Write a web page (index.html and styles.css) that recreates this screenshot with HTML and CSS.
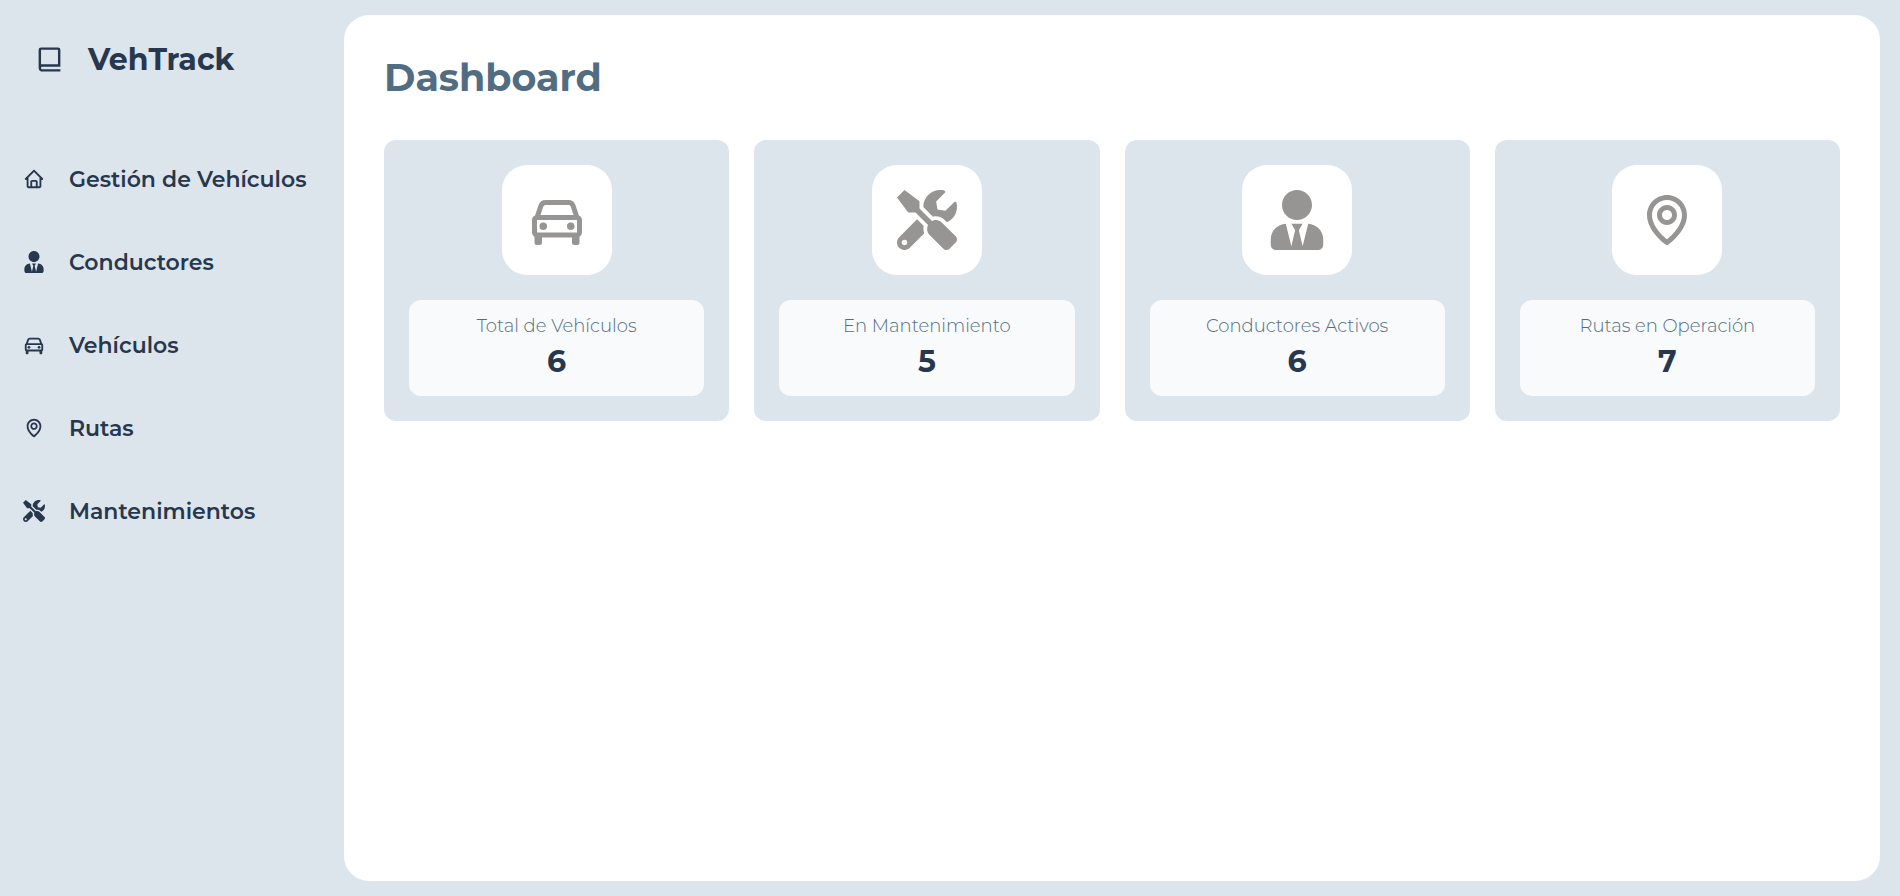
FILE: index.html
```html
<!DOCTYPE html>
<html lang="es">
<head>
<meta charset="utf-8">
<meta name="viewport" content="width=device-width, initial-scale=1">
<title>VehTrack</title>
<link rel="stylesheet" href="styles.css">
</head>
<body>
<svg class="sprite" aria-hidden="true">
  <symbol id="book" viewBox="0 0 24 24"><path fill-rule="evenodd" d="M6.012 18H21V4a2 2 0 0 0-2-2H5a2 2 0 0 0-2 2v15c0 2.201 1.794 3 3 3h15v-2H6.012C5.55 19.988 5 19.805 5 19s.55-.988 1.012-1zM5 4h14v12H5z"/></symbol>
  <symbol id="home" viewBox="0 0 24 24"><path d="M3 13h1v7c0 1.103.897 2 2 2h12c1.103 0 2-.897 2-2v-7h1a1 1 0 0 0 .707-1.707l-9-9a.999.999 0 0 0-1.414 0l-9 9A1 1 0 0 0 3 13zm7 7v-5h4v5h-4zm2-15.586 6 6V15l.001 5H16v-5c0-1.103-.897-2-2-2h-4c-1.103 0-2 .897-2 2v5H6v-9.586l6-6z"/></symbol>
  <symbol id="driver" viewBox="0 0 448 512"><path d="M224 256c70.7 0 128-57.3 128-128S294.7 0 224 0 96 57.3 96 128s57.3 128 128 128zm95.8 32.6L272 480l-32-136 32-56h-96l32 56-32 136-47.8-191.4C56.9 292 0 350.3 0 422.4V464c0 26.5 21.5 48 48 48h352c26.5 0 48-21.5 48-48v-41.6c0-72.1-56.9-130.4-128.2-133.8z"/></symbol>
  <symbol id="car" viewBox="0 0 24 24"><path d="m20.772 10.156-1.368-4.105A2.995 2.995 0 0 0 16.559 4H7.441a2.995 2.995 0 0 0-2.845 2.051l-1.368 4.105A2.003 2.003 0 0 0 2 12v5c0 .753.423 1.402 1.039 1.743-.013.066-.039.126-.039.195V21a1 1 0 0 0 1 1h1a1 1 0 0 0 1-1v-2h12v2a1 1 0 0 0 1 1h1a1 1 0 0 0 1-1v-2.062c0-.069-.026-.13-.039-.195A1.993 1.993 0 0 0 22 17v-5c0-.829-.508-1.541-1.228-1.844zM4 17v-5h16l.002 5H4zM7.441 6h9.117c.431 0 .813.274.949.684L18.613 10H5.387l1.105-3.316A1 1 0 0 1 7.441 6z"/><circle cx="6.5" cy="14.5" r="1.5"/><circle cx="17.5" cy="14.5" r="1.5"/></symbol>
  <symbol id="pin" viewBox="0 0 24 24"><path d="M12 14c2.206 0 4-1.794 4-4s-1.794-4-4-4-4 1.794-4 4 1.794 4 4 4zm0-6c1.103 0 2 .897 2 2s-.897 2-2 2-2-.897-2-2 .897-2 2-2z"/><path d="M11.42 21.814a.998.998 0 0 0 1.16 0C12.884 21.599 20.029 16.44 20 10c0-4.411-3.589-8-8-8S4 5.589 4 9.995c-.029 6.445 7.116 11.604 7.42 11.819zM12 4c3.309 0 6 2.691 6 6 .021 4.438-4.388 8.423-6 9.73-1.611-1.308-6.021-5.294-6-9.735 0-3.309 2.691-6 6-6z"/></symbol>
  <symbol id="tools" viewBox="0 0 512 512"><path d="M501.1 395.7L384 278.6c-23.1-23.1-57.6-27.6-85.4-13.9L192 158.1V96L64 0 0 64l96 128h62.1l106.6 106.6c-13.6 27.8-9.2 62.3 13.9 85.4l117.1 117.1c14.6 14.6 38.2 14.6 52.7 0l52.7-52.7c14.5-14.6 14.5-38.2 0-52.7zM331.7 225c28.3 0 54.9 11 74.9 31l19.4 19.4c15.8-6.9 30.8-16.5 43.8-29.5 37.1-37.1 49.7-89.3 37.9-136.7-2.2-9-13.5-12.1-20.1-5.5l-74.4 74.4-67.9-11.3L334 98.9l74.4-74.4c6.6-6.6 3.4-17.9-5.7-20.2-47.4-11.7-99.6.9-136.6 37.9-28.5 28.5-41.9 66.1-41.2 103.6l82.1 82.1c8.1-1.9 16.5-2.9 24.7-2.9zm-103.9 82l-56.7-56.7L18.7 402.8c-25 25-25 65.5 0 90.5s65.5 25 90.5 0l123.6-123.6c-7.6-19.9-9.9-41.6-5-62.7zM64 472c-13.2 0-24-10.8-24-24 0-13.3 10.7-24 24-24s24 10.7 24 24c0 13.2-10.7 24-24 24z"/></symbol>
</svg>
<div class="app">
  <aside class="sidebar">
    <div class="brand"><svg class="brand-icon" aria-hidden="true"><use href="#book"/></svg><span>VehTrack</span></div>
    <nav class="nav">
      <a class="nav-link" href="#gestion"><svg class="nav-icon" aria-hidden="true"><use href="#home"/></svg><span>Gestión de Vehículos</span></a>
      <a class="nav-link" href="#conductores"><svg class="nav-icon" aria-hidden="true"><use href="#driver"/></svg><span>Conductores</span></a>
      <a class="nav-link" href="#vehiculos"><svg class="nav-icon" aria-hidden="true"><use href="#car"/></svg><span>Vehículos</span></a>
      <a class="nav-link" href="#rutas"><svg class="nav-icon" aria-hidden="true"><use href="#pin"/></svg><span>Rutas</span></a>
      <a class="nav-link" href="#mantenimientos"><svg class="nav-icon" aria-hidden="true"><use href="#tools"/></svg><span>Mantenimientos</span></a>
    </nav>
  </aside>
  <main class="panel">
    <h1 class="title">Dashboard</h1>
    <section class="cards">
      <article class="card">
        <div class="card-icon"><svg aria-hidden="true"><use href="#car"/></svg></div>
        <div class="stat"><h2 class="stat-label">Total de Vehículos</h2><p class="stat-value">6</p></div>
      </article>
      <article class="card">
        <div class="card-icon"><svg aria-hidden="true"><use href="#tools"/></svg></div>
        <div class="stat"><h2 class="stat-label">En Mantenimiento</h2><p class="stat-value">5</p></div>
      </article>
      <article class="card">
        <div class="card-icon"><svg aria-hidden="true"><use href="#driver"/></svg></div>
        <div class="stat"><h2 class="stat-label">Conductores Activos</h2><p class="stat-value">6</p></div>
      </article>
      <article class="card">
        <div class="card-icon"><svg aria-hidden="true"><use href="#pin"/></svg></div>
        <div class="stat"><h2 class="stat-label">Rutas en Operación</h2><p class="stat-value">7</p></div>
      </article>
    </section>
  </main>
</div>
</body>
</html>
```
FILE: styles.css
```css
:root {
  --ink: #27374d;
  --slate: #526d82;
  --mist: #dde5ec;
}

* {
  box-sizing: border-box;
  margin: 0;
}

body {
  background: var(--mist);
  color: var(--ink);
  font-family: Montserrat, Inter, sans-serif;
}

svg {
  fill: currentColor;
}

.sprite {
  display: none;
}

.app {
  display: flex;
  min-height: 100vh;
  padding: 15px 20px 15px 0;
}

.sidebar {
  flex: 0 0 344px;
  padding: 24px 0 0 23px;
}

.brand {
  display: flex;
  align-items: center;
  gap: 24px;
  height: 40px;
  padding-left: 12px;
  font-size: 30px;
  font-weight: 700;
}

.brand-icon {
  width: 29px;
  height: 29px;
}

.nav {
  display: flex;
  flex-direction: column;
  gap: 43px;
  margin-top: 80px;
}

.nav-link {
  display: flex;
  align-items: center;
  gap: 24px;
  height: 40px;
  color: inherit;
  font-size: 22px;
  font-weight: 600;
  text-decoration: none;
  white-space: nowrap;
}

.nav-icon {
  flex: none;
  width: 22px;
  height: 22px;
}

.panel {
  flex: 1;
  min-width: 0;
  padding: 40px;
  background: #fff;
  border-radius: 25px;
}

.title {
  color: var(--slate);
  font-size: 38px;
  font-weight: 700;
  line-height: 46px;
}

.cards {
  display: grid;
  grid-template-columns: repeat(4, 1fr);
  gap: 25px;
  margin-top: 39px;
}

.card {
  display: flex;
  flex-direction: column;
  align-items: center;
  gap: 25px;
  padding: 25px;
  background: var(--mist);
  border-radius: 12px;
}

.card-icon {
  display: grid;
  place-items: center;
  width: 110px;
  height: 110px;
  background: #fff;
  border-radius: 25px;
  color: #979593;
}

.card-icon svg {
  width: 60px;
  height: 60px;
}

.stat {
  width: 100%;
  padding: 12px;
  background: #f8fafc;
  border-radius: 12px;
  text-align: center;
}

.stat-label {
  color: var(--slate);
  font-size: 18px;
  font-weight: 300;
  line-height: 28px;
}

.stat-value {
  font-size: 30px;
  font-weight: 700;
  line-height: 44px;
}
```
